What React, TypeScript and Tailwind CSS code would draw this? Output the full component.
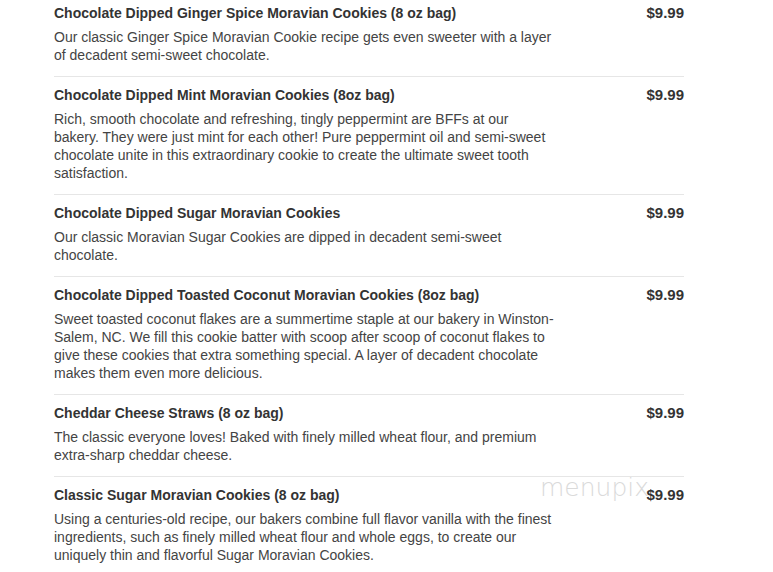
import React from 'react';

interface MenuItem {
  name: string;
  desc: string;
  price: string;
}

const items: MenuItem[] = [
  {
    name: 'Chocolate Dipped Ginger Spice Moravian Cookies (8 oz bag)',
    desc: 'Our classic Ginger Spice Moravian Cookie recipe gets even sweeter with a layer of decadent semi-sweet chocolate.',
    price: '$9.99',
  },
  {
    name: 'Chocolate Dipped Mint Moravian Cookies (8oz bag)',
    desc: 'Rich, smooth chocolate and refreshing, tingly peppermint are BFFs at our bakery. They were just mint for each other! Pure peppermint oil and semi-sweet chocolate unite in this extraordinary cookie to create the ultimate sweet tooth satisfaction.',
    price: '$9.99',
  },
  {
    name: 'Chocolate Dipped Sugar Moravian Cookies',
    desc: 'Our classic Moravian Sugar Cookies are dipped in decadent semi-sweet chocolate.',
    price: '$9.99',
  },
  {
    name: 'Chocolate Dipped Toasted Coconut Moravian Cookies (8oz bag)',
    desc: 'Sweet toasted coconut flakes are a summertime staple at our bakery in Winston-Salem, NC. We fill this cookie batter with scoop after scoop of coconut flakes to give these cookies that extra something special. A layer of decadent chocolate makes them even more delicious.',
    price: '$9.99',
  },
  {
    name: 'Cheddar Cheese Straws (8 oz bag)',
    desc: 'The classic everyone loves! Baked with finely milled wheat flour, and premium extra-sharp cheddar cheese.',
    price: '$9.99',
  },
  {
    name: 'Classic Sugar Moravian Cookies (8 oz bag)',
    desc: 'Using a centuries-old recipe, our bakers combine full flavor vanilla with the finest ingredients, such as finely milled wheat flour and whole eggs, to create our uniquely thin and flavorful Sugar Moravian Cookies.',
    price: '$9.99',
  },
];

const Row: React.FC<{ item: MenuItem; last: boolean }> = ({ item, last }) => (
  <div className={`flex justify-between pt-[9px] pb-[12px] ${last ? '' : 'border-b border-[#e6e6e6]'}`}>
    <div className="w-[500px]">
      <h3 className="text-[14px] leading-[18px] font-bold text-[#333]">{item.name}</h3>
      <p className="mt-[6px] text-[14px] leading-[18px] text-[#444]">{item.desc}</p>
    </div>
    <div className="text-[15px] leading-[18px] font-bold text-[#333]">{item.price}</div>
  </div>
);

export default function App() {
  return (
    <div className="relative w-[773px] h-[572px] overflow-hidden bg-white font-['Liberation_Sans',Arial,sans-serif]">
      <div className="ml-[54px] w-[630px] -mt-[5px]">
        {items.map((item, i) => (
          <Row key={item.name} item={item} last={i === items.length - 1} />
        ))}
      </div>
      <div className="absolute left-[540px] top-[475px] text-[25px] leading-[26px] font-extralight text-[#dadada] font-['DejaVu_Sans',sans-serif] pointer-events-none">
        menupix
      </div>
    </div>
  );
}
